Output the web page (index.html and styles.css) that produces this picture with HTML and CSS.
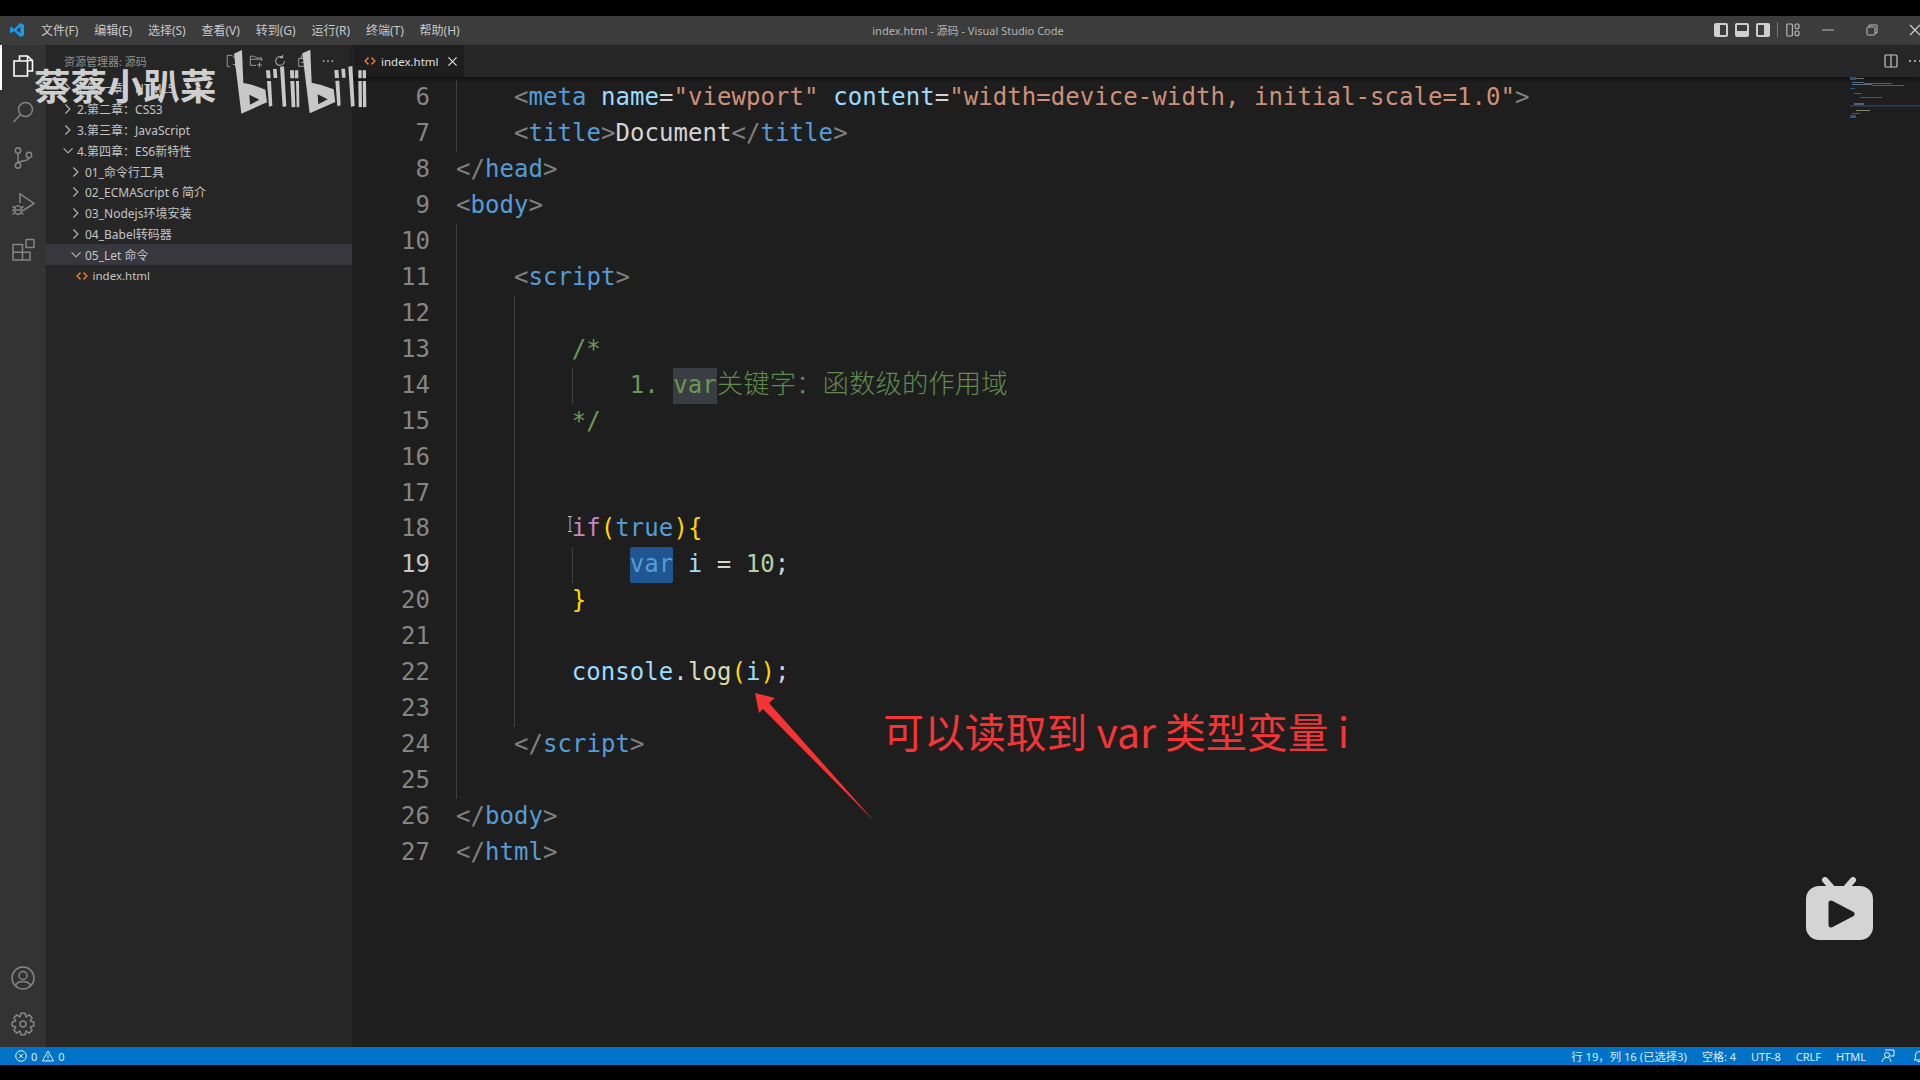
FILE: index.html
```html
<!DOCTYPE html>
<html lang="zh-CN">
<head>
<meta charset="utf-8">
<title>index.html - 源码 - Visual Studio Code</title>
<link rel="stylesheet" href="styles.css">
</head>
<body>
<div class="letterbox-top"></div>
<div class="window">
  <header class="titlebar">
    <div class="title-left">
      <svg class="vs-logo" viewBox="0 0 24 24"><path fill="#1a9be8" fill-rule="evenodd" d="M17 1.5 22.5 4v16L17 22.5 7.5 13.6 3.4 16.8 1.5 15.8V8.2l1.9-1 4.1 3.2zM17 7.2 11 12l6 4.8z"/></svg>
      <nav class="menu"><span>文件(F)</span><span>编辑(E)</span><span>选择(S)</span><span>查看(V)</span><span>转到(G)</span><span>运行(R)</span><span>终端(T)</span><span>帮助(H)</span></nav>
    </div>
    <div class="win-title">index.html - 源码 - Visual Studio Code</div>
    <div class="title-right">
      <svg class="layout" viewBox="0 0 14 14"><rect width="14" height="14" rx="2" fill="#cfcfcf"/><rect x="6" y="2" width="6" height="10" fill="#3c3c3c"/></svg>
      <svg class="layout" viewBox="0 0 14 14"><rect width="14" height="14" rx="2" fill="#cfcfcf"/><rect x="2" y="2" width="10" height="6" fill="#3c3c3c"/></svg>
      <svg class="layout" viewBox="0 0 14 14"><rect width="14" height="14" rx="2" fill="#cfcfcf"/><rect x="2" y="2" width="6" height="10" fill="#3c3c3c"/></svg>
      <i class="sep"></i>
      <svg class="layout custom" viewBox="0 0 14 14" fill="none" stroke="#b8b8b8" stroke-width="1.2"><rect x=".8" y="1" width="5.6" height="12" rx="1"/><rect x="9" y="1" width="4" height="4.6" rx="1.4"/><rect x="9" y="8" width="4" height="4.6" rx="1.4"/></svg>
      <svg class="wbtn min" viewBox="0 0 12 12"><path d="M0 6h12" stroke="#bdbdbd" stroke-width="1"/></svg>
      <svg class="wbtn rest" viewBox="0 0 12 12" fill="none" stroke="#bdbdbd"><path d="M3 3V1h8v8H9"/><rect x="1" y="3" width="8" height="8" rx="1"/></svg>
      <svg class="wbtn close" viewBox="0 0 12 12"><path d="M1 1l10 10M11 1 1 11" stroke="#d5d5d5" stroke-width="1.2"/></svg>
    </div>
  </header>

  <div class="workbench">
    <aside class="activity">
      <div class="act-group top-group">
        <div class="act-item on"><svg viewBox="0 0 24 24" fill="none" stroke="#fff" stroke-width="1.6"><path d="M8.5 6.5V2h8l5 4.5V17h-5"/><path d="M16.5 2v4.5h5"/><path d="M3 7h13.5v15H3z"/></svg></div>
        <div class="act-item"><svg viewBox="0 0 24 24" fill="none" stroke="#858585" stroke-width="1.5"><circle cx="14.5" cy="9.5" r="7"/><path d="M9.500 14.500 2.500 22"/></svg></div>
        <div class="act-item"><svg viewBox="0 0 24 24" fill="none" stroke="#858585" stroke-width="1.5"><circle cx="7" cy="4.5" r="2.7"/><circle cx="7" cy="19.5" r="2.7"/><circle cx="18" cy="9" r="2.7"/><path d="M7 7.2v9.6M18 11.7c0 4-9.5 2.5-11 5"/></svg></div>
        <div class="act-item"><svg viewBox="0 0 24 24" fill="none" stroke="#858585" stroke-width="1.5"><path d="M9 11V2l14 9.5L13 18"/><ellipse cx="7" cy="18" rx="3.5" ry="4.2"/><path d="M1.500 14.500 4 16M1 18.500h2.500M1.500 22.500 4 20.500M12.500 14.500 10 16M13 18.500h-2.500M12.500 22.500 10 20.500M3.500 18h7"/></svg></div>
        <div class="act-item"><svg viewBox="0 0 24 24" fill="none" stroke="#858585" stroke-width="1.5"><rect x="15" y="1.500" width="8" height="8" rx=".5"/><path d="M2 6.500h9.500V22H2zM2 14.200h17V22h-7.500"/></svg></div>
      </div>
      <div class="act-group">
        <div class="act-item"><svg viewBox="0 0 24 24" fill="none" stroke="#858585" stroke-width="1.5"><circle cx="12" cy="12" r="11"/><circle cx="12" cy="9.500" r="4"/><path d="M4.500 20c1.500-6 13.500-6 15 0"/></svg></div>
        <div class="act-item"><svg viewBox="0 0 24 24" fill="none" stroke="#858585" stroke-width="1.5" stroke-linejoin="round"><g id="tooth"><path d="M9.100 5 9.900 1.200h4.200L14.900 5"/></g><use href="#tooth" transform="rotate(45 12 12)"/><use href="#tooth" transform="rotate(90 12 12)"/><use href="#tooth" transform="rotate(135 12 12)"/><use href="#tooth" transform="rotate(180 12 12)"/><use href="#tooth" transform="rotate(225 12 12)"/><use href="#tooth" transform="rotate(270 12 12)"/><use href="#tooth" transform="rotate(315 12 12)"/><circle cx="12" cy="12" r="3"/></svg></div>
      </div>
    </aside>

    <aside class="sidebar">
      <div class="side-head">
        <span class="side-title">资源管理器: 源码</span>
        <div class="side-tools">
          <svg viewBox="0 0 16 16" fill="none" stroke="#a8a8a8"><path d="M8 1.500H2.500v13H6M8 1.500l4 4V8M9 12h6M12 9v6"/></svg>
          <svg viewBox="0 0 16 16" fill="none" stroke="#a8a8a8"><path d="M8 13H1.500V2.500h5l1.500 2h6.500V8M1.500 6h13M9 12.500h6M12 9.500v6"/></svg>
          <svg viewBox="0 0 16 16" fill="none" stroke="#a8a8a8" stroke-width="1.200"><path d="M13 8a5 5 0 1 1-2-4M11 1v3.200H7.800"/></svg>
          <svg viewBox="0 0 16 16" fill="none" stroke="#a8a8a8"><rect x="2" y="5" width="9" height="9"/><path d="M5 5V2h9v9h-3M4.500 9.500h4"/></svg>
          <svg viewBox="0 0 16 16" fill="#c5c5c5"><circle cx="3" cy="8" r="1"/><circle cx="8" cy="8" r="1"/><circle cx="13" cy="8" r="1"/></svg>
        </div>
      </div>
      <ul class="tree">
        <li class="row d0"><svg class="chev" viewBox="0 0 16 16"><path d="M4 3l5 5-5 5"/></svg>1.第一章：HTML5</li>
        <li class="row d0"><svg class="chev" viewBox="0 0 16 16"><path d="M4 3l5 5-5 5"/></svg>2.第二章：CSS3</li>
        <li class="row d0"><svg class="chev" viewBox="0 0 16 16"><path d="M4 3l5 5-5 5"/></svg>3.第三章：JavaScript</li>
        <li class="row d0"><svg class="chev" viewBox="0 0 16 16"><path d="M2 5l5 5 5-5"/></svg>4.第四章：ES6新特性</li>
        <li class="row d1"><svg class="chev" viewBox="0 0 16 16"><path d="M4 3l5 5-5 5"/></svg>01_命令行工具</li>
        <li class="row d1"><svg class="chev" viewBox="0 0 16 16"><path d="M4 3l5 5-5 5"/></svg>02_ECMAScript 6 简介</li>
        <li class="row d1"><svg class="chev" viewBox="0 0 16 16"><path d="M4 3l5 5-5 5"/></svg>03_Nodejs环境安装</li>
        <li class="row d1"><svg class="chev" viewBox="0 0 16 16"><path d="M4 3l5 5-5 5"/></svg>04_Babel转码器</li>
        <li class="row d1 sel"><svg class="chev" viewBox="0 0 16 16"><path d="M2 5l5 5 5-5"/></svg>05_Let 命令</li>
        <li class="row d2 leaf"><svg class="file-ic" viewBox="0 0 16 16"><path d="M6 3.500 1.500 8 6 12.500M10 3.500 14.500 8 10 12.500"/></svg>index.html</li>
      </ul>
    </aside>

    <main class="main">
      <div class="tabs">
        <div class="tab">
          <svg class="file-ic" viewBox="0 0 16 16"><path d="M6 3.500 1.500 8 6 12.500M10 3.500 14.500 8 10 12.500"/></svg>
          <span class="tab-name">index.html</span>
          <svg class="tab-x" viewBox="0 0 12 12"><path d="M1.500 1.500l9 9M10.500 1.500l-9 9"/></svg>
        </div>
        <div class="tab-actions">
          <svg class="split" viewBox="0 0 14 14" fill="none" stroke="#c5c5c5" stroke-width="1.200"><rect x="1" y="1" width="12" height="12" rx="1"/><path d="M7 1v12"/></svg>
          <svg class="more" viewBox="0 0 14 14" fill="#c5c5c5"><circle cx="2" cy="7" r="1"/><circle cx="7" cy="7" r="1"/><circle cx="12" cy="7" r="1"/></svg>
        </div>
      </div>
      <div class="editor">
        <div class="line"><span class="num">6</span><i class="ind"></i><span class="code"><b class="p">&lt;</b><b class="t">meta</b> <b class="a">name</b><b class="x">=</b><b class="s">"viewport"</b> <b class="a">content</b><b class="x">=</b><b class="s">"width=device-width, initial-scale=1.0"</b><b class="p">&gt;</b></span></div>
        <div class="line"><span class="num">7</span><i class="ind"></i><span class="code"><b class="p">&lt;</b><b class="t">title</b><b class="p">&gt;</b><b class="x">Document</b><b class="p">&lt;/</b><b class="t">title</b><b class="p">&gt;</b></span></div>
        <div class="line"><span class="num">8</span><span class="code"><b class="p">&lt;/</b><b class="t">head</b><b class="p">&gt;</b></span></div>
        <div class="line"><span class="num">9</span><span class="code"><b class="p">&lt;</b><b class="t">body</b><b class="p">&gt;</b></span></div>
        <div class="line"><span class="num">10</span><i class="ind"></i></div>
        <div class="line"><span class="num">11</span><i class="ind"></i><span class="code"><b class="p">&lt;</b><b class="t">script</b><b class="p">&gt;</b></span></div>
        <div class="line"><span class="num">12</span><i class="ind"></i><i class="ind"></i></div>
        <div class="line"><span class="num">13</span><i class="ind"></i><i class="ind"></i><span class="code c">/*</span></div>
        <div class="line"><span class="num">14</span><i class="ind"></i><i class="ind"></i><i class="ind"></i><span class="code c">1. <b class="hl-soft">var</b><b class="cjk">关键字：函数级的作用域</b></span></div>
        <div class="line"><span class="num">15</span><i class="ind"></i><i class="ind"></i><span class="code c">*/</span></div>
        <div class="line"><span class="num">16</span><i class="ind"></i><i class="ind"></i></div>
        <div class="line"><span class="num">17</span><i class="ind"></i><i class="ind"></i></div>
        <div class="line"><span class="num">18</span><i class="ind"></i><i class="ind"></i><span class="code"><b class="k">if</b><b class="y">(</b><b class="t">true</b><b class="y">){</b></span></div>
        <div class="line"><span class="num cur">19</span><i class="ind"></i><i class="ind"></i><i class="ind"></i><span class="code"><b class="t hl">var</b> <b class="a">i</b> <b class="x">=</b> <b class="n">10</b><b class="x">;</b></span></div>
        <div class="line"><span class="num">20</span><i class="ind"></i><i class="ind"></i><span class="code"><b class="y">}</b></span></div>
        <div class="line"><span class="num">21</span><i class="ind"></i><i class="ind"></i></div>
        <div class="line"><span class="num">22</span><i class="ind"></i><i class="ind"></i><span class="code"><b class="a">console</b><b class="x">.</b><b class="f">log</b><b class="y">(</b><b class="a">i</b><b class="y">)</b><b class="x">;</b></span></div>
        <div class="line"><span class="num">23</span><i class="ind"></i><i class="ind"></i></div>
        <div class="line"><span class="num">24</span><i class="ind"></i><span class="code"><b class="p">&lt;/</b><b class="t">script</b><b class="p">&gt;</b></span></div>
        <div class="line"><span class="num">25</span><i class="ind"></i></div>
        <div class="line"><span class="num">26</span><span class="code"><b class="p">&lt;/</b><b class="t">body</b><b class="p">&gt;</b></span></div>
        <div class="line"><span class="num">27</span><span class="code"><b class="p">&lt;/</b><b class="t">html</b><b class="p">&gt;</b></span></div>
      </div>
    </main>
  </div>

  <footer class="status">
    <div class="st-left">
      <svg viewBox="0 0 12 12" fill="none" stroke="#e4f2ff"><circle cx="6" cy="6" r="5.300"/><path d="M3.800 3.800l4.400 4.400M8.200 3.800 3.800 8.200"/></svg><span>0</span>
      <svg class="warn" viewBox="0 0 12 12" fill="none" stroke="#e4f2ff"><path d="M6 1 11.500 11H.5zM6 4.500v3.500M6 9v1"/></svg><span>0</span>
    </div>
    <div class="st-right">
      <span class="s-pos">行 19，列 16 (已选择3)</span><span>空格: 4</span><span>UTF-8</span><span>CRLF</span><span>HTML</span>
      <svg class="fb" viewBox="0 0 14 14" fill="none" stroke="#e4f2ff"><path d="M4 1h9v6H9"/><circle cx="6" cy="6" r="2.500"/><path d="M1 13c.5-3 2-4.500 5-4.500s3.500 1.500 4 4.500"/></svg>
      <svg class="bell" viewBox="0 0 14 14" fill="none" stroke="#e4f2ff"><path d="M2 11c1.500-1 1.500-2 1.500-5a3.500 3.500 0 0 1 7 0c0 3 0 4 1.500 5zM5.500 12.500h3"/></svg>
    </div>
  </footer>
</div>
<div class="letterbox-bottom"></div>

<div class="wm-text">蔡蔡小趴菜</div>
<svg class="wm-logo" viewBox="0 0 480 210" fill="#c8c8c8">
  <g id="bili">
    <path fill-rule="evenodd" d="M42 26 66 15 70 114Q106 120 136 134L141 172Q100 190 64 206ZM88 149 118 164 90 179Z"/>
    <path d="M138 76h12l2 24h-12zM159 72h11l2 27h-11zM141 108h12l4 74-10 3zM180 66l12-2 7 120-11 2z"/>
  </g>
  <use href="#bili" x="205" y="-1"/>
  <path d="M210 76h12l1 24h-12zM225 76h10v24h-10zM211 108h12l3 78-11 1zM228 108h9l1 78-8 1z"/>
  <path d="M415 76h10v24h-10zM428 76h10v24h-10zM415 108h10l1 78-10 1zM428 108h10l1 78-10 1z"/>
</svg>

<svg class="minimap" viewBox="0 0 70 42">
  <rect x="0" y="28" width="70" height="1.500" fill="#264f78"/>
  <rect x="0" y="0" width="6" height="3" fill="#2b6ca3"/><rect x="6" y="1" width="8" height="1" fill="#8a8a8a"/>
  <rect x="2" y="5" width="12" height="1" fill="#5a8ab0"/><rect x="14" y="6" width="28" height="1" fill="#a4604a"/>
  <rect x="2" y="7" width="20" height="1" fill="#7a8a9a"/><rect x="22" y="8" width="32" height="1" fill="#a4604a"/>
  <rect x="0" y="11" width="5" height="1" fill="#2b6ca3"/><rect x="4" y="16" width="8" height="1" fill="#4f6f8f"/>
  <rect x="10" y="20" width="22" height="1" fill="#4f7f47"/><rect x="4" y="26" width="10" height="2" fill="#7f6aa0"/>
  <rect x="6" y="33" width="14" height="1" fill="#a9a98a"/><rect x="2" y="36" width="8" height="1" fill="#4f6f8f"/>
  <rect x="0" y="38" width="6" height="3" fill="#2b6ca3"/>
</svg>

<svg class="ibeam" viewBox="0 0 6 16"><path d="M1 .5h4M3 .5v15M1 15.500h4" stroke="#b9b9b9" fill="none"/></svg>

<svg class="arrow" viewBox="0 0 130 135"><polygon points="5,3 25,8 19,13 125,132 13,19 9,23" fill="#f53535"/></svg>
<div class="note">可以读取到 var 类型变量 i</div>

<svg class="tv" viewBox="0 0 67 63"><path d="M19 3l7 8M47 3l-7 8" stroke="#d4d4d4" stroke-width="6" stroke-linecap="round"/><rect y="9" width="67" height="54" rx="13" fill="#d4d4d4"/><path d="M25 26 46 37 25 48Z" fill="#1e1e1e" stroke="#1e1e1e" stroke-width="5" stroke-linejoin="round"/></svg>
</body>
</html>
```

FILE: styles.css
```css
* { box-sizing: border-box; }
html, body { margin: 0; padding: 0; height: 100%; }
body {
  width: 1920px; height: 1080px; overflow: hidden; background: #000; position: relative;
  display: flex; flex-direction: column;
  font-family: "Noto Sans", "Noto Sans CJK SC", sans-serif; font-size: 12px; color: #ccc;
}
.letterbox-top { height: 16px; background: #000; flex: none; }
.letterbox-bottom { height: 15px; background: #000; flex: none; }
.window { flex: 1; display: flex; flex-direction: column; min-height: 0; }

.titlebar {
  height: 29px; flex: none; background: #3c3c3c; display: grid; grid-template-columns: 1fr auto 1fr; align-items: center; padding-bottom: 2px;
}
.title-left { display: flex; align-items: center; padding-left: 9px; }
.vs-logo { width: 16px; height: 16px; }
.menu { display: flex; gap: 15.800px; margin-left: 16px; color: #c8c8c8; white-space: nowrap; }
.win-title { padding-left: 16px; color: #b4b4b4; white-space: nowrap; font-size: 11px; }
.title-right { display: flex; align-items: center; justify-content: flex-end; position: relative; }
.layout { width: 14px; height: 14px; margin-right: 7px; flex: none; }
.sep { width: 1px; height: 15px; background: #777; margin: 0 8px 0 0; }
.custom { margin-right: 22px; }
.wbtn { width: 12px; height: 12px; flex: none; }
.min { margin-right: 32px; }
.rest { margin-right: 31px; }
.close { margin-right: -1px; }

.workbench { flex: 1; display: flex; min-height: 0; }

.activity { width: 46px; flex: none; background: #333; display: flex; flex-direction: column; justify-content: space-between; }
.top-group { margin-top: -2px; }
.act-item { width: 46px; height: 46px; display: flex; align-items: center; justify-content: center; position: relative; }
.act-item svg { width: 24px; height: 24px; }
.act-item.on::before { content: ""; position: absolute; left: 0; top: 2px; width: 2px; height: 45px; background: #fff; }

.sidebar { width: 306px; flex: none; background: #262626; }
.side-head { height: 33px; display: flex; align-items: center; padding-left: 18px; padding-bottom: 2px; position: relative; }
.side-title { font-size: 11px; color: #8f8f8f; width: 161px; white-space: nowrap; }
.side-tools { display: flex; gap: 10px; }
.side-tools svg { width: 14px; height: 14px; }
.tree { list-style: none; margin: 0; padding: 0; }
.row { height: 20.8px; display: flex; align-items: center; white-space: nowrap; color: #c4c4c4; font-size: 12px; }
.d0 { padding-left: 15px; }
.d1 { padding-left: 23px; }
.d2 { padding-left: 29.500px; }
.leaf { font-size: 11.500px; }
.sel { background: #37373d; }
.chev { width: 16px; height: 16px; flex: none; fill: none; stroke: #bdbdbd; stroke-width: 1.200; transform: scale(.9); }
.file-ic { width: 12px; height: 12px; flex: none; fill: none; stroke: #e37933; stroke-width: 2; margin-right: 5px; }

.main { flex: 1; min-width: 0; display: flex; flex-direction: column; background: #1e1e1e; }
.tabs { height: 32px; flex: none; background: #262626; display: flex; align-items: stretch; justify-content: space-between; box-shadow: 0 2px 4px rgba(0,0,0,.45); position: relative; }
.tab { width: 111px; background: #1e1e1e; display: flex; align-items: center; padding-left: 11px; margin-left: 1px; }
.tab .file-ic { width: 12px; height: 12px; margin-right: 5px; }
.tab-name { color: #e0e0e0; font-size: 11.500px; white-space: nowrap; width: 66px; }
.tab-x { width: 11px; height: 11px; stroke: #e0e0e0; stroke-width: 1.300; fill: none; flex: none; }
.tab-actions { display: flex; align-items: center; }
.split { width: 14px; height: 14px; margin-right: 10px; }
.more { width: 14px; height: 14px; margin-right: -2px; }

.editor { flex: 1; padding-top: 3.200px; font-family: "DejaVu Sans Mono", "Noto Sans CJK SC", monospace; font-size: 24px; letter-spacing: .06px; }
.line { height: 35.95px; line-height: 35.95px; display: flex; white-space: pre; }
.num { width: 78px; flex: none; margin-right: 26px; text-align: right; color: #858585; }
.num.cur { color: #c6c6c6; }
.ind { width: 57.9px; flex: none; box-shadow: inset 1px 0 #404040; }
.code { flex: none; }
.code b { font-weight: 400; }
.p { color: #808080; }
.t { color: #569cd6; }
.a { color: #9cdcfe; }
.s { color: #ce9178; }
.x { color: #d4d4d4; }
.k { color: #c586c0; }
.y { color: #ffd700; }
.n { color: #b5cea8; }
.f { color: #dcdcaa; }
.c { color: #6a9955; }
.hl { background: #1f5590; display: inline-block; height: 35.95px; border-radius: 2px; }
.hl-soft { background: #3a3d41; display: inline-block; height: 35.95px; }
.code b.cjk { font-family: "Noto Sans CJK SC", sans-serif; font-size: 26.4px; line-height: 0; font-weight: 300; color: #5f8b4d; }

.status { height: 18px; flex: none; background: #0073c9; color: #dcecff; display: flex; justify-content: space-between; align-items: center; font-size: 11px; }
.st-left { display: flex; align-items: center; padding-left: 15px; }
.st-left svg { width: 12px; height: 12px; margin-right: 4px; }
.st-left .warn { margin-left: 5px; }
.st-right { display: flex; align-items: center; gap: 15px; white-space: nowrap; }
.s-pos { font-size: 11.300px; }
.fb { width: 14px; height: 14px; }
.bell { width: 14px; height: 14px; margin-left: 2px; margin-right: -6px; }

.wm-text { position: absolute; left: 34px; top: 62px; font-family: "Noto Sans CJK SC", sans-serif; font-weight: 700; font-size: 36.500px; line-height: 46px; color: #cfcfcf; white-space: nowrap; }
.wm-logo { position: absolute; left: 220px; top: 45px; width: 160px; height: 70px; }
.minimap { position: absolute; left: 1850px; top: 77px; width: 70px; height: 42px; opacity: .75; }
.ibeam { position: absolute; left: 567px; top: 516px; width: 6px; height: 16px; }
.arrow { position: absolute; left: 750px; top: 690px; width: 130px; height: 135px; }
.note { position: absolute; left: 883px; top: 701px; font-family: "Noto Sans CJK SC", sans-serif; font-size: 40.900px; line-height: 60px; color: #f53535; white-space: pre; }
.tv { position: absolute; left: 1806px; top: 877px; width: 67px; height: 63px; }
```
